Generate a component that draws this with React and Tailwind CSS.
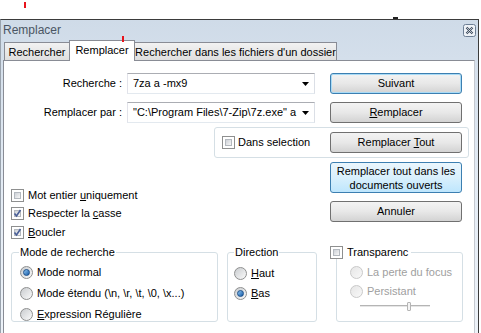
import React from "react";

function Check({ checked, disabled }) {
  return (
    <span
      className={
        "w-[13px] h-[13px] shrink-0 border p-[2px] flex bg-white " +
        (disabled ? "border-[#c4c4c4]" : "border-[#8e8f8f]")
      }
    >
      <span className="flex-1 flex items-center justify-center border border-[#b4b9bf] bg-linear-to-br from-[#cdd1d7] to-[#f7f7f7]">
        {checked && (
          <svg width="9" height="9" viewBox="0 0 9 9" className="-m-[2px]">
            <path d="M1.5 4.5 L3.5 7 L7.5 1" fill="none" stroke="#4a5f97" strokeWidth="1.6" />
          </svg>
        )}
      </span>
    </span>
  );
}

function Radio({ on, disabled }) {
  return (
    <span
      className={
        "w-[13px] h-[13px] shrink-0 rounded-full border flex items-center justify-center " +
        (disabled
          ? "border-[#c9c9c9] bg-linear-to-br from-[#e6e6e6] to-[#f8f8f8]"
          : "border-[#8e8f8f] bg-linear-to-br from-[#c9cccf] to-[#fbfbfb]")
      }
    >
      {on && (
        <span className="w-[7px] h-[7px] rounded-full border border-[#1b4f8a] bg-linear-to-br from-[#8fc6f0] to-[#0d5aa7]" />
      )}
    </span>
  );
}

function Btn({ children, kind, className = "" }) {
  let look =
    "border-[#707070] bg-linear-to-b from-[#f3f3f3] via-[#e8e8e8] to-[#d3d3d3]";
  if (kind === "default")
    look =
      "border-[#3c7fb1] bg-linear-to-b from-[#f3f3f3] via-[#e8e8e8] to-[#d3d3d3] shadow-[inset_0_0_0_1px_#a9dbf6]";
  if (kind === "hot")
    look =
      "border-[#3c7fb1] bg-linear-to-b from-[#eaf6fd] via-[#d9f0fc] to-[#bee6fd]";
  return (
    <div
      className={
        "w-[132px] rounded-[3px] border flex flex-col items-center justify-center text-center " +
        look +
        " " +
        className
      }
    >
      {children}
    </div>
  );
}

function Combo({ value }) {
  return (
    <div className="ml-[4px] w-[188px] h-[21px] border border-[#abadb3] border-b-[#e3e9ef] border-l-[#e2e3ea] border-r-[#dbdfe6] bg-white flex items-center pl-[5px] pr-[5px]">
      <span className="flex-1 whitespace-nowrap overflow-hidden">{value}</span>
      <svg width="7" height="4" viewBox="0 0 7 4" className="ml-[4px] shrink-0">
        <path d="M0 0 H7 L3.5 4 Z" fill="#000" />
      </svg>
    </div>
  );
}

function Row({ children, className = "" }) {
  return <div className={"flex items-center gap-[4px] h-[13px] whitespace-nowrap " + className}>{children}</div>;
}

export default function App() {
  return (
    <div className="relative w-[481px] h-[333px] overflow-hidden bg-white text-[11px] leading-[13px] text-black font-['Liberation_Sans',Arial,sans-serif]">
      {/* stray marks over the capture */}
      <span className="absolute left-[24px] top-[2px] w-[2px] h-[6px] bg-[#e8141c]" />
      <span className="absolute left-[122px] top-[36px] w-[2px] h-[6px] bg-[#e8141c] z-20" />
      <span className="absolute left-[393px] top-[17px] w-[5px] h-[2px] bg-[#222]" />

      <div className="h-[19px]" />

      <div className="w-[479px] h-[330px] border-t border-x border-t-[#3b3b3b] border-l-[#9aa3ad] border-r-[#3b3b3b] bg-linear-to-b from-[#cfdbe8] via-[#e4ecf5] to-[#eef3f9]">
        {/* title bar */}
        <div className="h-[20px] flex items-center justify-between pl-[2px] pr-[2px]">
          <span className="text-[12px] text-[#4a5563]">Remplacer</span>
          <svg width="13" height="13" viewBox="0 0 13 13">
            <rect x="0.5" y="0.5" width="12" height="12" rx="2" fill="#eef2f7" stroke="#6d7f95" />
            <path d="M3.5 3.5 L9.5 9.5 M9.5 3.5 L3.5 9.5" stroke="#3d4b5c" strokeWidth="2.2" />
            <path d="M3.5 3.5 L9.5 9.5 M9.5 3.5 L3.5 9.5" stroke="#eef2f7" strokeWidth="0.7" />
          </svg>
        </div>

        {/* tabs */}
        <div className="h-[20px] flex items-end pl-[3px] whitespace-nowrap">
          <div className="w-[66px] h-[18px] border border-b-0 border-[#898c95] bg-linear-to-b from-[#f2f2f2] to-[#dfdfdf] flex items-center justify-center pt-[1px]">
            Rechercher
          </div>
          <div className="relative z-10 -ml-px -mb-px w-[66px] h-[21px] border border-b-0 border-[#898c95] bg-white flex items-start justify-center pt-[3px]">
            Remplacer
          </div>
          <div className="-ml-px w-[203px] h-[18px] border border-b-0 border-[#898c95] bg-linear-to-b from-[#f2f2f2] to-[#dfdfdf] flex items-center justify-center pt-[1px]">
            Rechercher dans les fichiers d'un dossier
          </div>
        </div>

        {/* panel */}
        <div className="ml-[2px] w-[472px] h-[300px] border border-[#898c95] border-r-[#c5c9d0] bg-white">
          <div className="mt-[12px] h-[21px] flex items-center">
            <span className="w-[119px] text-right pr-[1px]">Recherche :</span>
            <Combo value="7za a -mx9" />
            <Btn kind="default" className="ml-[15px] h-[21px]">Suivant</Btn>
          </div>

          <div className="mt-[8px] h-[21px] flex items-center">
            <span className="w-[119px] text-right pr-[1px]">Remplacer par :</span>
            <Combo value={'"C:\\Program Files\\7-Zip\\7z.exe" a'} />
            <Btn className="ml-[15px] h-[21px]">
              <span>
                <u>R</u>emplacer
              </span>
            </Btn>
          </div>

          <div className="mt-[4px] ml-[210px] w-[255px] h-[31px] border border-[#d5dfe5] rounded-[3px] flex items-center pl-[7px] pr-[6px]">
            <Check />
            <span className="ml-[3px]">Dans selection</span>
            <Btn className="ml-auto h-[21px]">
              <span>
                Remplacer <u>T</u>out
              </span>
            </Btn>
          </div>

          <div className="mt-[4px] flex">
            <div className="w-[326px] pl-[7px] pt-[27px] flex flex-col">
              <Row>
                <Check />
                <span>
                  Mot entier <u>u</u>niquement
                </span>
              </Row>
              <Row className="mt-[5px]">
                <Check checked />
                <span>
                  Respecter la <u>c</u>asse
                </span>
              </Row>
              <Row className="mt-[6px]">
                <Check checked />
                <span>
                  <u>B</u>oucler
                </span>
              </Row>
            </div>
            <div className="flex flex-col">
              <Btn kind="hot" className="h-[31px] leading-[14px]">
                <span>Remplacer tout dans les</span>
                <span>documents ouverts</span>
              </Btn>
              <Btn className="mt-[8px] h-[21px]">Annuler</Btn>
            </div>
          </div>

          <div className="mt-[7px] flex pl-[7px]">
            <fieldset className="w-[207px] h-[76px] border border-[#d5dfe5] rounded-[3px] px-[7px]">
              <legend className="px-[1px]">Mode de recherche</legend>
              <Row className="mt-[7px] ml-[1px]">
                <Radio on />
                <span>Mode normal</span>
              </Row>
              <Row className="mt-[8px] ml-[1px]">
                <Radio />
                <span>Mode étendu (\n, \r, \t, \0, \x...)</span>
              </Row>
              <Row className="mt-[8px] ml-[1px]">
                <Radio />
                <span>
                  <u>E</u>xpression Régulière
                </span>
              </Row>
            </fieldset>

            <fieldset className="ml-[9px] w-[90px] h-[76px] border border-[#d5dfe5] rounded-[3px] px-[6px]">
              <legend className="px-[1px]">Direction</legend>
              <Row className="mt-[8px]">
                <Radio />
                <span>
                  <u>H</u>aut
                </span>
              </Row>
              <Row className="mt-[7px]">
                <Radio on />
                <span>
                  <u>B</u>as
                </span>
              </Row>
            </fieldset>

            <fieldset className="ml-[19px] w-[127px] h-[76px] border border-[#d5dfe5] rounded-[3px] px-0">
              <legend className="-ml-[7px] pr-[3px] bg-white flex items-center gap-[4px]">
                <Check />
                <span>Transparenc</span>
              </legend>
              <div className="pl-[13px]">
                <Row className="mt-[7px] text-[#a0a0a0]">
                  <Radio disabled />
                  <span>La perte du focus</span>
                </Row>
                <Row className="mt-[6px] text-[#a0a0a0]">
                  <Radio disabled />
                  <span>Persistant</span>
                </Row>
                <div className="mt-[3px] ml-[10px] w-[70px] h-[10px] flex items-center">
                  <div className="flex-1 h-[2px] border-t border-[#b5b5b5] border-b-white bg-[#e6e6e6]" />
                  <div className="w-[4px] h-[9px] rounded-[1px] border border-[#b5b5b5] bg-[#f4f4f4] -ml-[23px] mr-[19px]" />
                </div>
              </div>
            </fieldset>
          </div>
        </div>
      </div>
    </div>
  );
}
